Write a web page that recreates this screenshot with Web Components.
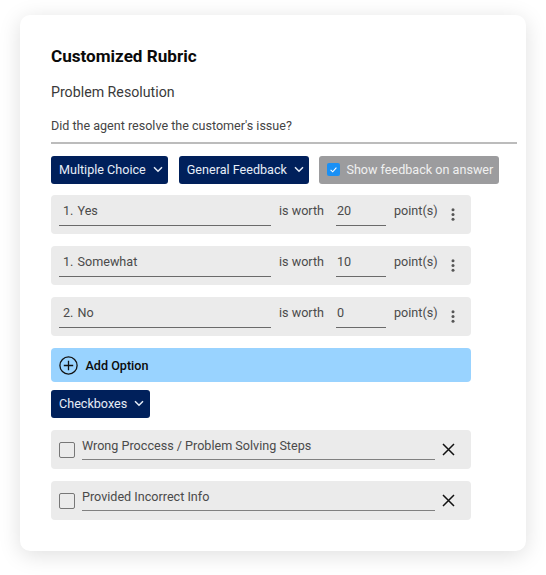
<!DOCTYPE html>
<html>
<head>
<meta charset="utf-8">
<style>
  html, body { margin: 0; background: #fff; }
  body { font-family: Roboto, "Liberation Sans", sans-serif; box-sizing: border-box; height: 575px; padding: 15px 0 0 20px; }
</style>
</head>
<body>
<rubric-card>
  <span slot="title">Customized Rubric</span>
  <span slot="subtitle">Problem Resolution</span>
  <span slot="question">Did the agent resolve the customer's issue?</span>
  <div slot="toolbar">
    <drop-button>Multiple Choice</drop-button>
    <drop-button>General Feedback</drop-button>
    <feedback-toggle>Show feedback on answer</feedback-toggle>
  </div>
  <div slot="options">
    <option-row label="1. Yes" points="20"></option-row>
    <option-row label="1. Somewhat" points="10"></option-row>
    <option-row label="2. No" points="0"></option-row>
  </div>
  <add-option slot="add">Add Option</add-option>
  <drop-button slot="kind">Checkboxes</drop-button>
  <div slot="checks">
    <check-row label="Wrong Proccess / Problem Solving Steps"></check-row>
    <check-row label="Provided Incorrect Info"></check-row>
  </div>
</rubric-card>

<script>
/////////////////////// 
///// Rubric card /////
//////////////////////

class RubricCard extends HTMLElement {
    constructor() {
        super();
        this.attachShadow({ mode: 'open' });
        this.shadowRoot.innerHTML = `
        <style>
            :host {
                display: block;
                box-sizing: border-box;
                width: 506px;
                height: 536px;
                padding: 31px 9px 0 31px;
                background: #fff;
                border-radius: 10px;
                box-shadow: 0 4px 22px rgba(0, 0, 0, .13);
            }
            .title { font-size: 17.1px; line-height: 20px; font-weight: 700; color: #0a0a0a; height: 20px; }
            .subtitle { font-size: 14.2px; line-height: 18px; color: #3a3a3a; margin-top: 17px; }
            .question { font-size: 12.55px; line-height: 16px; color: #444; margin-top: 17px; }
            hr { border: 0; height: 2px; background: #bcbcbc; margin: 8px 0 12px; }
            ::slotted([slot="toolbar"]) { display: flex; gap: 10.5px; }
            ::slotted([slot="options"]) { display: flex; flex-direction: column; gap: 12.5px; margin-top: 11.5px; }
            ::slotted([slot="add"]) { margin-top: 12.5px; }
            ::slotted([slot="kind"]) { margin-top: 8px; }
            ::slotted([slot="checks"]) { display: flex; flex-direction: column; gap: 12.5px; margin-top: 12.5px; }
        </style>
        <div class="title"><slot name="title"></slot></div>
        <div class="subtitle"><slot name="subtitle"></slot></div>
        <div class="question"><slot name="question"></slot></div>
        <hr>
        <slot name="toolbar"></slot>
        <slot name="options"></slot>
        <slot name="add"></slot>
        <slot name="kind"></slot>
        <slot name="checks"></slot>`;
    }
}
customElements.define('rubric-card', RubricCard);

/////////////////////// 
////// Buttons ///////
//////////////////////

class DropButton extends HTMLElement {
    constructor() {
        super();
        this.attachShadow({ mode: 'open' });
        this.shadowRoot.innerHTML = `
        <style>
            :host {
                display: inline-flex;
                align-items: center;
                box-sizing: border-box;
                height: 27.5px;
                padding: 0 5.5px 0 8px;
                gap: 7px;
                background: #00205b;
                color: #e6edf7;
                border-radius: 3px;
                font-size: 12.6px;
                white-space: nowrap;
            }
            svg { width: 10px; height: 7px; }
        </style>
        <slot></slot>
        <svg viewBox="0 0 10 7"><path d="M1 1.2 L5 5.2 L9 1.2" fill="none" stroke="#e6edf7" stroke-width="1.5"/></svg>`;
    }
}
customElements.define('drop-button', DropButton);

class FeedbackToggle extends HTMLElement {
    constructor() {
        super();
        this.attachShadow({ mode: 'open' });
        this.shadowRoot.innerHTML = `
        <style>
            :host {
                display: inline-flex;
                align-items: center;
                box-sizing: border-box;
                width: 180px;
                height: 27.5px;
                margin-left: -.5px;
                padding-left: 8px;
                gap: 6px;
                background: #9c9c9e;
                color: #f0f0f0;
                border-radius: 3px;
                font-size: 12.6px;
                white-space: nowrap;
            }
            svg { width: 13px; height: 13px; flex: none; }
        </style>
        <svg viewBox="0 0 13 13">
            <rect width="13" height="13" rx="2" fill="#1a90f5"/>
            <path d="M3.6 6.8 L5.7 8.8 L9.4 4.6" fill="none" stroke="#fff" stroke-width="1.1"/>
        </svg>
        <slot></slot>`;
    }
}
customElements.define('feedback-toggle', FeedbackToggle);

class AddOption extends HTMLElement {
    constructor() {
        super();
        this.attachShadow({ mode: 'open' });
        this.shadowRoot.innerHTML = `
        <style>
            :host {
                display: flex;
                align-items: center;
                box-sizing: border-box;
                width: 420px;
                height: 34px;
                padding-left: 8px;
                gap: 7.5px;
                background: #99d3ff;
                color: #0b0b0b;
                border-radius: 4px;
                font-size: 12.6px;
                font-weight: 500;
            }
            svg { width: 19px; height: 19px; }
        </style>
        <svg viewBox="0 0 19 19" fill="none" stroke="#111" stroke-width="1.3">
            <circle cx="9.5" cy="9.5" r="8.6"/>
            <path d="M9.5 4.8 V14.2 M4.8 9.5 H14.2"/>
        </svg>
        <slot></slot>`;
    }
}
customElements.define('add-option', AddOption);

/////////////////////// 
/////// Rows /////////
//////////////////////

const rowStyle = `
    :host {
        display: flex;
        box-sizing: border-box;
        width: 420px;
        height: 38.5px;
        background: #ebebeb;
        border-radius: 4px;
        color: #4a4a4a;
        font-size: 12.6px;
        line-height: 16px;
    }
    .field {
        box-sizing: border-box;
        height: 31px;
        padding-top: 8px;
        border-bottom: 1px solid #6a6a6a;
        white-space: nowrap;
    }
`;

class OptionRow extends HTMLElement {
    constructor() {
        super();
        this.attachShadow({ mode: 'open' });
        this.shadowRoot.innerHTML = `
        <style>
            ${rowStyle}
            :host { padding-left: 8px; }
            .label { width: 212px; padding-left: 4px; word-spacing: 1px; }
            .worth { margin-left: 8px; width: 57px; padding-top: 8px; }
            .points { width: 50px; padding-left: 1px; }
            .unit { margin-left: 8px; width: 44px; padding-top: 8px; }
            svg { width: 4px; height: 13px; margin: 12.5px 0 0 13px; }
        </style>
        <div class="field label"></div>
        <div class="worth">is worth</div>
        <div class="field points"></div>
        <div class="unit">point(s)</div>
        <svg viewBox="0 0 4 13" fill="#555">
            <circle cx="2" cy="1.7" r="1.5"/><circle cx="2" cy="6.5" r="1.5"/><circle cx="2" cy="11.3" r="1.5"/>
        </svg>`;
        this.shadowRoot.querySelector('.label').textContent = this.getAttribute('label');
        this.shadowRoot.querySelector('.points').textContent = this.getAttribute('points');
    }
}
customElements.define('option-row', OptionRow);

class CheckRow extends HTMLElement {
    constructor() {
        super();
        this.attachShadow({ mode: 'open' });
        this.shadowRoot.innerHTML = `
        <style>
            ${rowStyle}
            :host { padding-left: 8px; }
            .box {
                box-sizing: border-box;
                width: 16px;
                height: 16px;
                margin: 11.5px 7px 0 0;
                border: 1.3px solid #777;
                border-radius: 2px;
            }
            .field { width: 353px; height: 30px; padding-top: 8px; border-bottom-color: #808080; }
            svg { width: 13px; height: 13px; margin: 13px 0 0 7px; }
        </style>
        <div class="box"></div>
        <div class="field"></div>
        <svg viewBox="0 0 13 13"><path d="M1 1 L12 12 M12 1 L1 12" fill="none" stroke="#111" stroke-width="1.5"/></svg>`;
        this.shadowRoot.querySelector('.field').textContent = this.getAttribute('label');
    }
}
customElements.define('check-row', CheckRow);
</script>
</body>
</html>
